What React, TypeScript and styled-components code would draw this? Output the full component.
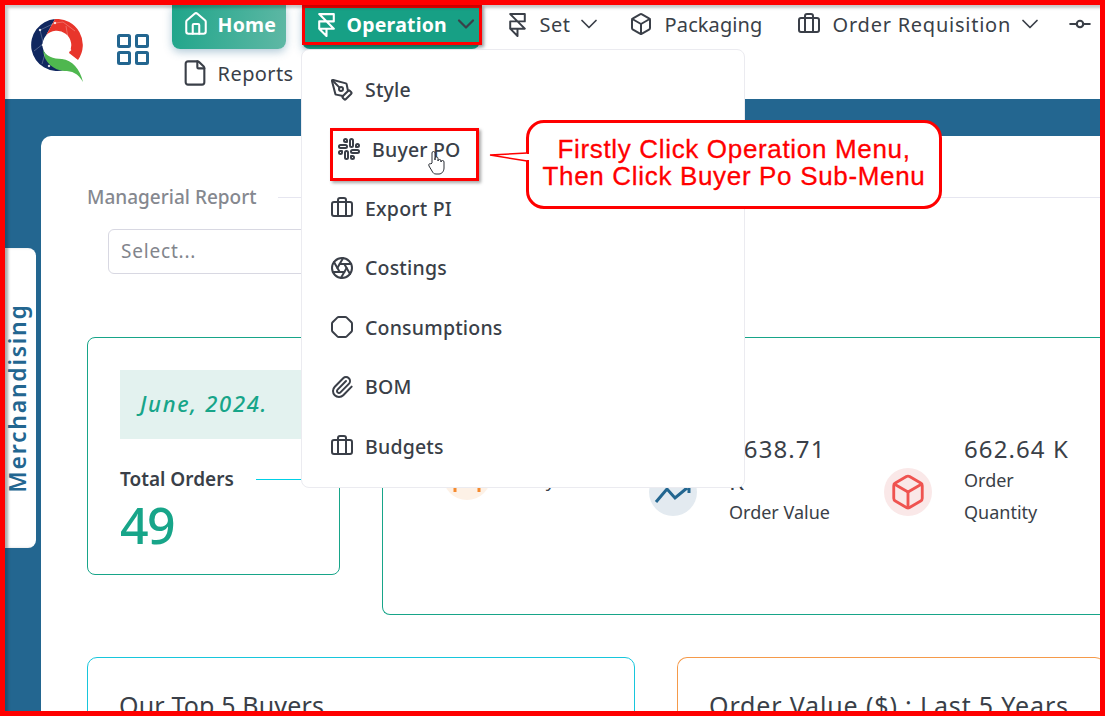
import React from 'react';
import styled, { createGlobalStyle } from 'styled-components';
import {
  Aperture,
  Box,
  Briefcase,
  ChevronDown,
  File,
  Framer,
  GitCommitHorizontal,
  Home as HomeIcon,
  Octagon,
  Paperclip,
  PenTool,
  Slack,
} from 'lucide-react';

const GlobalStyle = createGlobalStyle`
  html, body {
    margin: 0;
    padding: 0;
    overflow: hidden;
    background: #fff;
  }
  * { box-sizing: border-box; }
`;

const Page = styled.div`
  position: relative;
  width: 1105px;
  height: 716px;
  overflow: hidden;
  background: #236690;
  font-family: 'Noto Sans', sans-serif;
  color: #3a3f48;
`;

const Frame = styled.div`
  position: absolute;
  inset: 0;
  border: 5px solid #ff0000;
  box-shadow: inset 3px 3px 3px rgba(0, 0, 0, 0.22);
  pointer-events: none;
  z-index: 50;
`;

const Header = styled.header`
  display: flex;
  height: 99px;
  padding-left: 30px;
  background: #fff;
`;

const LogoBox = styled.div`
  width: 53px;
  padding-top: 19px;
`;

const GridButton = styled.div`
  width: 89px;
  padding: 34px 0 0 34px;
`;

const Nav = styled.nav`
  display: flex;
  flex-wrap: wrap;
  align-content: flex-start;
  row-gap: 5px;
  width: 940px;
  padding-top: 5px;
`;

const NavItem = styled.div<{ $width: number; $offset?: number; $tracking?: number }>`
  display: flex;
  align-items: center;
  gap: 12px;
  flex: none;
  width: ${(p) => p.$width}px;
  height: 44px;
  margin-left: ${(p) => p.$offset ?? 0}px;
  padding: 0 0 6px 13px;
  font-size: 20px;
  letter-spacing: ${(p) => p.$tracking ?? 0.4}px;
  white-space: nowrap;
`;

const ActiveItem = styled(NavItem)<{ $gradient?: boolean }>`
  padding-left: 12px;
  font-size: 19.5px;
  font-weight: 700;
  letter-spacing: 0.2px;
  color: #fff;
  border-radius: 0 0 8px 8px;
  background: ${(p) =>
    p.$gradient ? 'linear-gradient(100deg, #1fa58a 0%, #5fb8a5 100%)' : '#17a085'};
  box-shadow: 0 3px 8px rgba(35, 102, 144, 0.35);
`;

const HomeGlyph = styled(HomeIcon)`
  flex: none;
  margin: 0 -3px 0 -1px;
`;

const FramerGlyph = styled(Framer)<{ $pull: number }>`
  flex: none;
  margin-right: -${(p) => p.$pull}px;
`;

const ReportsGlyph = styled(File)`
  flex: none;
  margin: 0 -3px 0 -4px;
`;

const NavChevron = styled(ChevronDown)`
  flex: none;
  margin: 0 -7px;
  color: #3a3f48;
`;

const Body = styled.main`
  padding: 37px 0 0 41px;
`;

const SideTab = styled.div`
  position: absolute;
  left: 5px;
  top: 248px;
  display: flex;
  align-items: center;
  justify-content: center;
  width: 31px;
  height: 300px;
  padding-right: 8px;
  background: #fff;
  border-radius: 0 8px 8px 0;
  box-shadow: inset 3px 0 3px rgba(0, 0, 0, 0.15);
`;

const SideLabel = styled.span`
  transform: rotate(-90deg);
  font-size: 23px;
  font-weight: 600;
  letter-spacing: 1.75px;
  color: #236690;
  white-space: nowrap;
`;

const Sheet = styled.section`
  height: 600px;
  padding: 46px 0 0 46px;
  background: #fff;
  border-radius: 10px 0 0 0;
`;

const ReportHead = styled.div`
  display: flex;
  align-items: center;
  gap: 21px;
  height: 30px;
  font-size: 19px;
  font-weight: 500;
  color: #85888f;
  white-space: nowrap;
`;

const HeadRule = styled.span`
  flex: 1;
  height: 1px;
  background: #e6e6f0;
`;

const SelectBox = styled.div`
  display: flex;
  align-items: center;
  width: 400px;
  height: 45px;
  margin: 17px 0 63px 21px;
  padding: 0 0 2px 12px;
  border: 1px solid #d8d8e2;
  border-radius: 6px;
  font-size: 19px;
  letter-spacing: 0.8px;
  color: #82858c;
`;

const CardRow = styled.div`
  display: flex;
  align-items: flex-start;
  gap: 42px;
`;

const TotalCard = styled.div`
  width: 253px;
  height: 238px;
  padding: 32px 0 0 32px;
  border: 1px solid #17a589;
  border-radius: 8px;
`;

const MonthBox = styled.div`
  display: flex;
  align-items: center;
  height: 69px;
  padding: 0 0 3px 20px;
  background: #e3f2ef;
  font-size: 22px;
  font-weight: 500;
  font-style: italic;
  letter-spacing: 1.7px;
  color: #17a589;
`;

const TotalHead = styled.div`
  display: flex;
  align-items: center;
  gap: 22px;
  margin-top: 26px;
  height: 28px;
  font-size: 19px;
  font-weight: 600;
  white-space: nowrap;
`;

const CyanRule = styled.span`
  flex: 1;
  height: 1px;
  background: #00d0e6;
`;

const TotalValue = styled.div`
  font-size: 50px;
  line-height: 64px;
  font-weight: 500;
  letter-spacing: -1.5px;
  color: #17a589;
`;

const StatsCard = styled.div`
  display: flex;
  flex: 1;
  height: 278px;
  padding: 95px 0 0 60px;
  border: 1px solid #17a589;
  border-right: 0;
  border-radius: 8px 0 0 8px;
`;

const Stat = styled.div<{ $width: number }>`
  display: flex;
  gap: 32px;
  width: ${(p) => p.$width}px;
  flex: none;
`;

const IconCircle = styled.div<{ $bg: string; $color: string; $top: number }>`
  display: flex;
  align-items: center;
  justify-content: center;
  flex: none;
  width: 48px;
  height: 48px;
  margin-top: ${(p) => p.$top}px;
  border-radius: 50%;
  background: ${(p) => p.$bg};
  color: ${(p) => p.$color};
`;

const StatText = styled.div`
  max-width: 112px;
  font-size: 18px;
  line-height: 31.5px;
`;

const StatValue = styled.div`
  font-size: 24px;
  line-height: 32px;
  letter-spacing: 1.1px;
`;

const BottomRow = styled.div`
  display: flex;
  gap: 42px;
  margin-top: 42px;
`;

const ChartCard = styled.div<{ $color: string; $width?: number; $tracking: number }>`
  flex: ${(p) => (p.$width ? 'none' : '1')};
  width: ${(p) => (p.$width ? `${p.$width}px` : 'auto')};
  height: 200px;
  padding: 30px 0 0 31px;
  border: 1px solid ${(p) => p.$color};
  border-right-width: ${(p) => (p.$width ? 1 : 0)}px;
  border-radius: 10px;
  font-size: 25px;
  line-height: 34px;
  letter-spacing: ${(p) => p.$tracking}px;
  white-space: nowrap;
`;

const Dropdown = styled.div`
  position: absolute;
  left: 301px;
  top: 49px;
  width: 444px;
  height: 439px;
  padding: 10px 0 0 28px;
  background: #fff;
  border: 1px solid #ebebf0;
  border-radius: 8px;
  z-index: 20;
`;

const MenuItem = styled.div<{ $hover?: boolean }>`
  display: flex;
  align-items: center;
  gap: 11px;
  height: 59.4px;
  padding-left: ${(p) => (p.$hover ? 7 : 0)}px;
  font-size: 19.5px;
  font-weight: 500;
  letter-spacing: 0.2px;
`;

const RedBox = styled.div<{ $left: number; $top: number; $width: number; $height: number }>`
  position: absolute;
  left: ${(p) => p.$left}px;
  top: ${(p) => p.$top}px;
  width: ${(p) => p.$width}px;
  height: ${(p) => p.$height}px;
  border: 3px solid #ff0000;
  box-shadow: 2px 2px 3px rgba(0, 0, 0, 0.35);
  z-index: 30;
`;

const HandCursor = styled.svg`
  position: absolute;
  left: 427px;
  top: 150px;
  z-index: 31;
`;

const Callout = styled.div`
  position: absolute;
  left: 526px;
  top: 120px;
  display: flex;
  align-items: center;
  justify-content: center;
  width: 416px;
  height: 89px;
  padding-bottom: 4px;
  background: #fff;
  border: 3px solid #ff0000;
  border-radius: 18px;
  font-family: 'Liberation Sans', Arial, sans-serif;
  font-size: 26px;
  line-height: 27px;
  letter-spacing: 0.67px;
  -webkit-text-stroke: 0.3px #ff0000;
  text-align: center;
  white-space: nowrap;
  color: #ff0000;
  z-index: 30;
`;

const CalloutTail = styled.svg`
  position: absolute;
  left: 488px;
  top: 145px;
  z-index: 31;
`;

function Logo() {
  return (
    <svg width="53" height="64" viewBox="0 0 53 64">
      <path d="M25 0A26 26 0 1 0 35 50.700L20 38.700A14.500 14.500 0 0 1 16 16.500Z" fill="#10275f" />
      <path d="M25 0A26 26 0 0 1 48 41L39 34A14.500 14.500 0 0 0 16 16.500Z" fill="#e8352b" />
      <path d="M13 31C16 37 23 40 32 40C42 41 50 50 53 63C48 54 42 52 34 52C24 51 14 44 13 31Z" fill="#4fb74f" />
      <g stroke="#fff" strokeOpacity="0.45" strokeWidth="0.6" fill="#fff">
        <path d="M10 11l4 16M10 11L25 4M4 32l9-7M25 4l8-1M33 3l12 9M36 7l4 24M12 45l5-17" />
        <circle cx="10" cy="11" r="1" />
        <circle cx="13" cy="26" r="1" />
        <circle cx="25" cy="4" r="1" />
        <circle cx="40" cy="31" r="1" />
        <circle cx="19" cy="47" r="1" />
      </g>
    </svg>
  );
}

function GridIcon() {
  return (
    <svg width="32" height="31" viewBox="0 0 32 31" fill="none" stroke="#236690" strokeWidth="3">
      <rect x="1.5" y="1.5" width="11" height="11" rx="1" />
      <rect x="19.5" y="1.5" width="11" height="11" rx="1" />
      <rect x="1.500" y="18.500" width="11" height="11" rx="1" />
      <rect x="19.500" y="18.500" width="11" height="11" rx="1" />
    </svg>
  );
}

// only the lower edge of this icon shows under the dropdown
function BuyerGlyph() {
  return (
    <svg width="48" height="48" viewBox="0 0 48 48" stroke="currentColor" strokeWidth="3" fill="none">
      <path d="M12 36v4M36 36v4" />
    </svg>
  );
}

function ValueGlyph() {
  return (
    <svg width="48" height="48" viewBox="0 0 48 48" stroke="currentColor" strokeWidth="3" fill="none">
      <path d="M7 34L18 21L26 30L38 20M40 20v5" />
    </svg>
  );
}

const menu = [
  { label: 'Style', icon: PenTool },
  { label: 'Buyer PO', icon: Slack, hover: true },
  { label: 'Export PI', icon: Briefcase },
  { label: 'Costings', icon: Aperture },
  { label: 'Consumptions', icon: Octagon },
  { label: 'BOM', icon: Paperclip },
  { label: 'Budgets', icon: Briefcase },
];

export default function App() {
  return (
    <Page>
      <GlobalStyle />
      <Header>
        <LogoBox>
          <Logo />
        </LogoBox>
        <GridButton>
          <GridIcon />
        </GridButton>
        <Nav>
          <ActiveItem $width={114} $gradient>
            <HomeGlyph size={26} strokeWidth={1.9} />
            Home
          </ActiveItem>
          <ActiveItem $width={178} $offset={16}>
            <FramerGlyph $pull={4} size={25} strokeWidth={2} />
            Operation
            <NavChevron size={28} strokeWidth={1.9} />
          </ActiveItem>
          <NavItem $width={124} $offset={12}>
            <FramerGlyph $pull={2} size={25} strokeWidth={1.9} />
            Set
            <NavChevron size={28} strokeWidth={1.5} />
          </NavItem>
          <NavItem $width={168} $tracking={0.1}>
            <Box size={24} />
            Packaging
          </NavItem>
          <NavItem $width={270} $tracking={0.75}>
            <Briefcase size={24} />
            Order Requisition
            <NavChevron size={28} strokeWidth={1.5} />
          </NavItem>
          <NavItem $width={40}>
            <GitCommitHorizontal size={26} />
          </NavItem>
          <NavItem $width={160}>
            <ReportsGlyph size={28} strokeWidth={1.8} />
            Reports
          </NavItem>
        </Nav>
      </Header>

      <Body>
        <Sheet>
          <ReportHead>
            Managerial Report
            <HeadRule />
          </ReportHead>
          <SelectBox>Select...</SelectBox>
          <CardRow>
            <TotalCard>
              <MonthBox>June, 2024.</MonthBox>
              <TotalHead>
                Total Orders
                <CyanRule />
              </TotalHead>
              <TotalValue>49</TotalValue>
            </TotalCard>
            <StatsCard>
              <Stat $width={206}>
                <IconCircle $bg="#fdf1e6" $color="#f58a2e" $top={19}>
                  <BuyerGlyph />
                </IconCircle>
                <StatText>
                  <StatValue>12</StatValue>
                  Buyer
                </StatText>
              </Stat>
              <Stat $width={235}>
                <IconCircle $bg="#e3eaf0" $color="#236690" $top={35}>
                  <ValueGlyph />
                </IconCircle>
                <StatText>
                  <StatValue>$638.71 K</StatValue>
                  Order Value
                </StatText>
              </Stat>
              <Stat $width={200}>
                <IconCircle $bg="#fae8e8" $color="#ef5350" $top={35}>
                  <Box size={38} strokeWidth={1.8} />
                </IconCircle>
                <StatText>
                  <StatValue>662.64 K</StatValue>
                  Order Quantity
                </StatText>
              </Stat>
            </StatsCard>
          </CardRow>
          <BottomRow>
            <ChartCard $color="#17c6dc" $width={548} $tracking={0.15}>
              Our Top 5 Buyers
            </ChartCard>
            <ChartCard $color="#f59a4a" $tracking={0.85}>
              Order Value ($) : Last 5 Years
            </ChartCard>
          </BottomRow>
        </Sheet>
      </Body>

      <SideTab>
        <SideLabel>Merchandising</SideLabel>
      </SideTab>

      <Dropdown>
        {menu.map((m) => (
          <MenuItem key={m.label} $hover={m.hover}>
            <m.icon size={24} />
            {m.label}
          </MenuItem>
        ))}
      </Dropdown>

      <RedBox $left={302} $top={5} $width={180} $height={40} />
      <RedBox $left={330} $top={128} $width={149} $height={53} />
      <HandCursor width="19" height="25" viewBox="0 0 19 25" fill="#fff" stroke="#2b2f36" strokeWidth="1">
        <path d="M5 13V3a1.500 1.500 0 0 1 3 0v7V8.500a1.500 1.500 0 0 1 3 0V11a1.400 1.400 0 0 1 3 0v1a1.300 1.300 0 0 1 3 0v6c0 3-2 6-5 6H9c-2 0-3-1-4-3l-3-5c-1-2 1-3 2-2z" />
      </HandCursor>
      <Callout>
        Firstly Click Operation Menu,
        <br />
        Then Click Buyer Po Sub-Menu
      </Callout>
      <CalloutTail width="42" height="26" viewBox="0 0 42 26">
        <path d="M38 9h4v6h-4z" fill="#fff" />
        <path d="M39 8L2 10L39 16" fill="#fff" stroke="#ff0000" strokeWidth="1.500" />
      </CalloutTail>
      <Frame />
    </Page>
  );
}
